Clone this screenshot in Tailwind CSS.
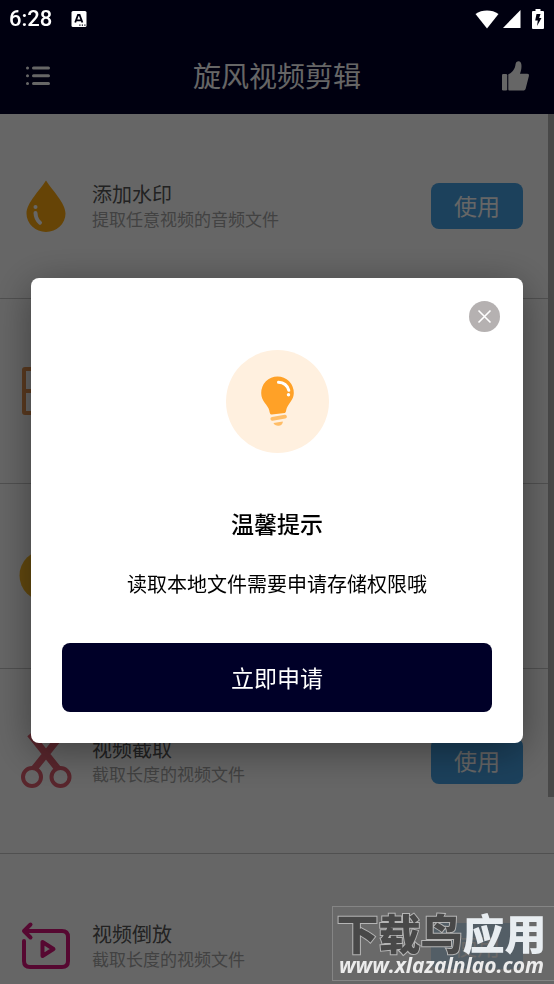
<!DOCTYPE html>
<html lang="zh-CN">
<head>
<meta charset="utf-8">
<meta name="viewport" content="width=device-width, initial-scale=1">
<title>旋风视频剪辑</title>
<script src="https://cdn.jsdelivr.net/npm/@tailwindcss/browser@4"></script>
</head>
<body class="flex h-screen flex-col overflow-hidden bg-white font-['Noto_Sans_CJK_SC',sans-serif] font-normal">

<!-- System status bar -->
<div class="fixed inset-x-0 top-0 z-30 flex h-[38px] items-center pl-[9px] pr-[10px] text-white">
  <span class="font-['Roboto',sans-serif] text-[22px] font-medium leading-none">6:28</span>
  <svg class="ml-[19px] h-4 w-4" viewBox="0 0 16 16" aria-hidden="true"><rect x=".5" width="15" height="16" rx="1.5" fill="#fff"/><path d="M4.2 11.5 7 4h1.6l2.8 7.5M5.5 9.3h4.600" fill="none" stroke="#00000f" stroke-width="1.800"/><path d="M8.300 14.200h1.200M10.800 14.200h1.200M13.300 14.200h1.200" stroke="#00000f" stroke-width="1.200"/></svg>
  <svg class="ml-auto h-[19px] w-6" viewBox="0 0 24 19" aria-hidden="true"><path d="M.5 4C7-.6 17-.6 23.500 4L12 18.500z" fill="#fff"/></svg>
  <svg class="ml-1 h-[18px] w-[18px]" viewBox="0 0 18 18" aria-hidden="true"><path d="M17.500 0v18H0z" fill="#fff"/></svg>
  <svg class="ml-[11px] h-5 w-3" viewBox="0 0 12 20" aria-hidden="true"><path d="M3.500 0h5v2H11a1 1 0 0 1 1 1v16a1 1 0 0 1-1 1H1a1 1 0 0 1-1-1V3a1 1 0 0 1 1-1h2.500z" fill="#fff"/><path d="M4.500 5h4L7.200 9H9.500L5 17l.8-5.500H3.200z" fill="#00000f"/></svg>
</div>

<!-- App header -->
<header class="shrink-0 bg-[#000028] pt-[38px] text-white">
  <div class="flex h-[76px] items-center justify-between px-6">
    <button type="button" aria-label="菜单" class="flex w-7 justify-start">
      <svg class="h-6 w-7" viewBox="0 0 28 24" stroke="#fff" stroke-width="3" stroke-linecap="round" aria-hidden="true"><path d="M9.500 4h15M9.500 11.800h15M9.500 19.500h15M3.500 4h.01M3.500 11.800h.01M3.500 19.500h.01"/></svg>
    </button>
    <h1 class="pb-[2px] text-[28px] font-normal leading-9">旋风视频剪辑</h1>
    <button type="button" aria-label="点赞" class="flex w-7">
      <svg class="h-[30px] w-7" viewBox="0 0 28 30" fill="#fff" aria-hidden="true"><rect y="13" width="5.200" height="16.500" rx="1.200"/><path d="M6.300 13.200c3.500-1 6.200-4.700 7-8.500C13.800 2 14 .5 16.200.3c2.300-.1 3.300 2 3.300 4.700 0 3-.7 5.600-1.500 7.800h7.200c1.500 0 2 .9 1.700 2.200L23.700 27.500c-.4 1.400-1.200 2-2.700 2H7.500c-.8 0-1.200-.4-1.200-1.200z"/></svg>
    </button>
  </div>
</header>

<!-- Tool list -->
<main class="relative min-h-0 grow overflow-hidden">
  <div class="absolute right-0 top-0 z-10 h-[683px] w-[6px] bg-[#b5b5b5]"></div>
  <ul>
    <li class="flex h-[185px] items-center border-b border-[#c8c8c8] pl-[15px] pr-[31px]">
      <svg class="h-[62px] w-[62px] shrink-0" viewBox="0 0 62 62" aria-hidden="true"><path d="M31 5.500C37 15 50.500 28 50.500 38.500a19.500 18.500 0 0 1-39 0C11.500 28 25 15 31 5.500z" fill="#ffaa10"/><circle cx="20.500" cy="32" r="2" fill="#fff"/><path d="M20.500 38c.2 4.500 1.600 7.300 4.500 9.800" stroke="#fff" stroke-width="4" stroke-linecap="round" fill="none"/></svg>
      <div class="ml-[15px] grow"><h2 class="text-[20px] leading-[25px] text-[#555]">添加水印</h2><p class="text-[17px] leading-[25px] text-[#a5a5a5]">提取任意视频的音频文件</p></div>
      <button type="button" class="h-[46px] w-[92px] rounded-lg bg-[#46a2e6] pb-[2px] text-[23px] font-normal text-white">使用</button>
    </li>
    <li class="flex h-[185px] items-center border-b border-[#c8c8c8] pl-[15px] pr-[31px]">
      <svg class="h-[62px] w-[62px] shrink-0" viewBox="0 0 62 62" fill="none" stroke="#e59350" stroke-width="4" aria-hidden="true"><rect x="9" y="9" width="44" height="44" rx="1"/><path d="M9 31h44M31 9v44"/></svg>
    </li>
    <li class="flex h-[185px] items-center border-b border-[#c8c8c8] pl-[15px] pr-[31px]">
      <svg class="h-[62px] w-[62px] shrink-0" viewBox="0 0 62 62" aria-hidden="true"><circle cx="30" cy="30.500" r="25.500" fill="#f5b625"/></svg>
    </li>
    <li class="flex h-[185px] items-center border-b border-[#c8c8c8] pl-[15px] pr-[31px]">
      <svg class="h-[62px] w-[62px] shrink-0" viewBox="0 0 62 62" fill="none" stroke="#de5f6f" aria-hidden="true"><path d="M15 4 43 39M47 4 19 39" stroke-width="7"/><circle cx="17" cy="47" r="9" stroke-width="4"/><circle cx="45.500" cy="47" r="9" stroke-width="4"/></svg>
      <div class="ml-[15px] grow"><h2 class="text-[20px] leading-[25px] text-[#555]">视频截取</h2><p class="text-[17px] leading-[25px] text-[#a5a5a5]">截取长度的视频文件</p></div>
      <button type="button" class="h-[46px] w-[92px] rounded-lg bg-[#46a2e6] pb-[2px] text-[23px] font-normal text-white">使用</button>
    </li>
    <li class="flex h-[185px] items-center border-b border-[#c8c8c8] pl-[15px] pr-[31px]">
      <svg class="h-[62px] w-[62px] shrink-0" viewBox="0 0 62 62" fill="none" stroke="#d8147c" stroke-width="4" stroke-linecap="round" stroke-linejoin="round" aria-hidden="true"><path d="M15.500 9.500 9 16l6.500 6.500M9 16h38q6 0 6 6v24q0 6-6 6H15q-6 0-6-6V26M27.500 27v14l11-7z"/></svg>
      <div class="ml-[15px] grow"><h2 class="text-[20px] leading-[25px] text-[#555]">视频倒放</h2><p class="text-[17px] leading-[25px] text-[#a5a5a5]">截取长度的视频文件</p></div>
      <button type="button" class="h-[46px] w-[92px] rounded-lg bg-[#46a2e6] pb-[2px] text-[23px] font-normal text-white">使用</button>
    </li>
  </ul>
</main>

<!-- Permission dialog -->
<div class="fixed inset-0 z-20 flex items-center bg-black/60 px-[31px] pt-[37px]">
  <section role="dialog" aria-modal="true" aria-labelledby="tip-title" class="relative flex grow flex-col items-center rounded-lg bg-white px-[31px] pb-[31px] pt-[72px] text-black shadow-[0_8px_40px_rgba(0,0,0,0.4)]">
    <button type="button" aria-label="关闭" class="absolute right-[23px] top-[23px]">
      <svg class="h-[31px] w-[31px]" viewBox="0 0 31 31" aria-hidden="true"><circle cx="15.500" cy="15.500" r="15.500" fill="#b5b1b1"/><path d="m9.500 9.500 12 12M21.500 9.500l-12 12" stroke="#fff" stroke-width="1.600"/></svg>
    </button>
    <svg class="h-[103px] w-[103px]" viewBox="0 0 103 103" aria-hidden="true">
      <circle cx="51.500" cy="51.500" r="51.500" fill="#fff0df"/>
      <path d="M51.500 26.500a16.300 16.300 0 0 1 16.300 16.500c0 6.500-5 10-7 15-.8 2-.6 4.500-2 5l-13 1.500c-2 .2-2-1.700-2.500-4-1.500-6-8.100-9-8.100-17.500A16.300 16.300 0 0 1 51.500 26.500z" fill="#ffa127"/>
      <path d="M52.500 32.300c5.500.3 9 3.500 10.300 8" stroke="#fff" stroke-width="3" stroke-linecap="round" fill="none"/><circle cx="62.500" cy="44.800" r="1.700" fill="#fff"/>
      <path d="m46.300 68.800 12.700-2.200" stroke="#ffbd67" stroke-width="3.800" stroke-linecap="round"/><path d="m47.500 73 9.300-1.500c.3 5.200-8 5.500-9.300 1.500z" fill="#ffbd67"/>
    </svg>
    <h2 id="tip-title" class="mt-[54px] text-[23px] font-medium leading-8">温馨提示</h2>
    <p class="mt-[30px] text-[20px] leading-[30px]">读取本地文件需要申请存储权限哦</p>
    <button type="button" class="mt-11 h-[69px] w-full rounded-lg bg-[#000028] text-[23px] text-white">立即申请</button>
  </section>
</div>

<!-- Site watermark -->
<div class="fixed bottom-[3px] right-0 z-40 flex h-[75px] w-[222px] flex-col items-center justify-center border border-r-0 border-[#858585] bg-[#6b6b6b]/70 pr-1">
  <div class="flex text-[42px] font-black leading-[42px] [paint-order:stroke_fill]"><span class="text-[#484848] [-webkit-text-stroke:2px_#b5b5b5]">下载鸟</span><span class="text-[#e8edf1]">应用</span></div>
  <div class="font-['Open_Sans',sans-serif] text-[21px] font-bold italic leading-6 text-[#ececec]">www.xlazalnlao.com</div>
</div>
</body>
</html>
